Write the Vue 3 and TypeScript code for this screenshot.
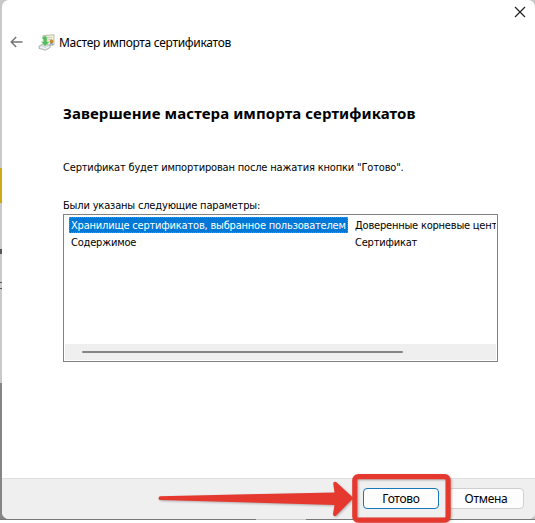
<script setup lang="ts">
interface Param {
  name: string
  value: string
  selected: boolean
}

const params: Param[] = [
  { name: 'Хранилище сертификатов, выбранное пользователем', value: 'Доверенные корневые цент', selected: true },
  { name: 'Содержимое', value: 'Сертификат', selected: false },
]
</script>

<template>
  <div class="screen">
    <div class="backdrop"><i class="tab"></i><i class="mark"></i><i class="tick"></i><i class="tick second"></i><i class="dark"></i></div>
    <main class="wizard">
      <div class="titlebar">
        <svg class="close" viewBox="0 0 12 12"><path d="M1 1 11 11M11 1 1 11" /></svg>
      </div>
      <header class="header">
        <svg class="back" viewBox="0 0 13 12"><path d="M6.2 1 1.2 6l5 5M1.2 6H12.5" /></svg>
        <svg class="cert" viewBox="0 0 17 17">
          <path d="M5 1.5 16 .8V11L6 12z" fill="#eeeedb" stroke="#b9b9a2" stroke-width=".9" />
          <path d="M8 3.5h6M10 5.5h4" stroke="#d2d2bc" />
          <path d="M1 12.2 5 9.8l7 1.4.2 2.3-4.7 2.7L1 14.4z" fill="#d9dde0" stroke="#989ea2" stroke-width=".7" />
          <path d="m2 13 5.5 1.6 4-2.2" fill="none" stroke="#f8fafa" />
          <path d="M6 2.6c2.5-.9 3.4.5 2.8 5.4H11l-4 4.1-3.6-4.4 2.4.2C6 5.8 5.3 4.7 4 4z" fill="#52bd60" stroke="#83cf83" stroke-width=".5" />
          <path d="m12.6 8-1 3 1.7-.8 1.4 1V8" fill="#8198ab" />
          <circle cx="13.6" cy="7.3" r="1.9" fill="#c88a29" />
        </svg>
        <span class="title">Мастер импорта сертификатов</span>
      </header>
      <section class="content">
        <h1>Завершение мастера импорта сертификатов</h1>
        <p class="message">Сертификат будет импортирован после нажатия кнопки "Готово".</p>
        <p class="label">Были указаны следующие параметры:</p>
        <div class="list">
          <div class="rows">
            <div v-for="p in params" :key="p.name" class="row" :class="{ selected: p.selected }">
              <span class="name"><span>{{ p.name }}</span></span>
              <span class="value">{{ p.value }}</span>
            </div>
          </div>
          <div class="scroll"><div class="thumb"></div></div>
        </div>
      </section>
      <footer class="footer">
        <button class="primary"><span>Готово</span></button>
        <button><span>Отмена</span></button>
      </footer>
    </main>
    <div class="edge"></div>
    <svg class="callout" viewBox="0 0 535 523">
      <path d="M160 496.3 334.5 492.4 333.3 484q-.2-3.2 2.8-2L353.5 498 336 515.8q-3 1.2-3-2L334.5 505 160 500a1.9 1.9 0 0 1 0-3.7z" />
      <rect x="354.8" y="476.6" width="93.3" height="43.5" rx="3.5" />
    </svg>
  </div>
</template>

<style>
body { background: #fff; overflow: hidden; }
</style>

<style scoped>
.screen { position: relative; width: 535px; height: 523px; overflow: hidden; background: #fff; font-family: "DejaVu Sans Condensed", "DejaVu Sans", sans-serif; font-stretch: condensed; color: #000; font-size: 11px; }
.backdrop { position: absolute; left: 0; top: 0; width: 535px; height: 520px; background: #c9c9c9; }
.backdrop i { position: absolute; left: 0; width: 2px; }
.backdrop .tab { top: 168px; height: 35px; background: #d0a916; }
.backdrop .mark { top: 249px; height: 5px; background: #555; }
.backdrop .tick { top: 282px; height: 1px; background: #555; }
.backdrop .tick.second { top: 288px; }
.backdrop .dark { top: 383px; height: 137px; width: 12px; background: #858585; }
.wizard { position: relative; display: flex; flex-direction: column; box-sizing: border-box; width: 533px; height: 519px; margin-left: 2px; background: #fff; border-radius: 7px; overflow: hidden; }
.titlebar { display: flex; justify-content: flex-end; height: 30px; padding: 6px 9px 0 0; box-sizing: border-box; }
.close { width: 12px; height: 12px; fill: none; stroke: #222; stroke-width: 1.2; }
.header { display: flex; align-items: center; height: 24px; padding-left: 8px; }
.back { width: 13px; height: 12px; fill: none; stroke: #747474; stroke-width: 1.4; }
.cert { width: 17px; height: 17px; margin-left: 15px; }
.title { margin-left: 4px; padding-top: 2px; font: 12px/18px "Noto Sans", sans-serif; letter-spacing: -.32px; white-space: nowrap; }
.content { padding: 48px 0 0 61px; flex: 1; }
h1 { margin: 0; font: bold 15px/22px "Noto Sans", sans-serif; letter-spacing: .08px; white-space: nowrap; }
p { margin: 0; line-height: 16px; white-space: nowrap; letter-spacing: -.17px; }
.message { margin-top: 36px; }
.label { margin-top: 22px; }
.list { display: flex; flex-direction: column; box-sizing: border-box; width: 435px; height: 148px; margin: 0; border: 1px solid #828282; padding: 1px; }
.rows { flex: 1; overflow: hidden; padding: 1px 0 0 4px; }
.row { display: flex; height: 17px; line-height: 17px; white-space: nowrap; letter-spacing: -.2px; }
.name { width: 286px; flex: none; }
.name span { display: block; width: 279px; height: 16px; box-sizing: border-box; padding-left: 2px; }
.selected .name span { background: #0078d7; color: #fff; outline: 1px dotted #b9783c; outline-offset: -1px; }
.value { width: 141px; overflow: hidden; }
.scroll { height: 16px; background: #efefef; display: flex; align-items: center; padding-left: 17px; }
.thumb { width: 321px; height: 2px; border-radius: 1px; background: #858585; }
.footer { display: flex; justify-content: flex-end; box-sizing: border-box; height: 41px; padding: 9px 11px 0 0; gap: 9px; background: #efefef; border-top: 1px solid #dfdfdf; }
button { box-sizing: border-box; width: 76px; height: 21px; padding: 0; border: 1px solid #d0d0d0; border-radius: 4px; background: #fdfdfd; color: #000; font: 12px/19px "Noto Sans", sans-serif; letter-spacing: -.3px; }
.primary { border-color: #1877b9; }
.edge { position: absolute; left: 256px; top: 519px; width: 50px; height: 1px; background: #c9c9c9; }
.screen::after { content: ""; position: absolute; left: 0; top: 519px; width: 256px; height: 1px; background: #777; box-shadow: 306px 0 #777; }
.callout { position: absolute; inset: 0; width: 535px; height: 523px; z-index: 2; filter: drop-shadow(1px 1px 1px #0004); }
.callout path { fill: #e5392f; }
.callout rect { fill: none; stroke: #e5392f; stroke-width: 5.2; }
</style>
